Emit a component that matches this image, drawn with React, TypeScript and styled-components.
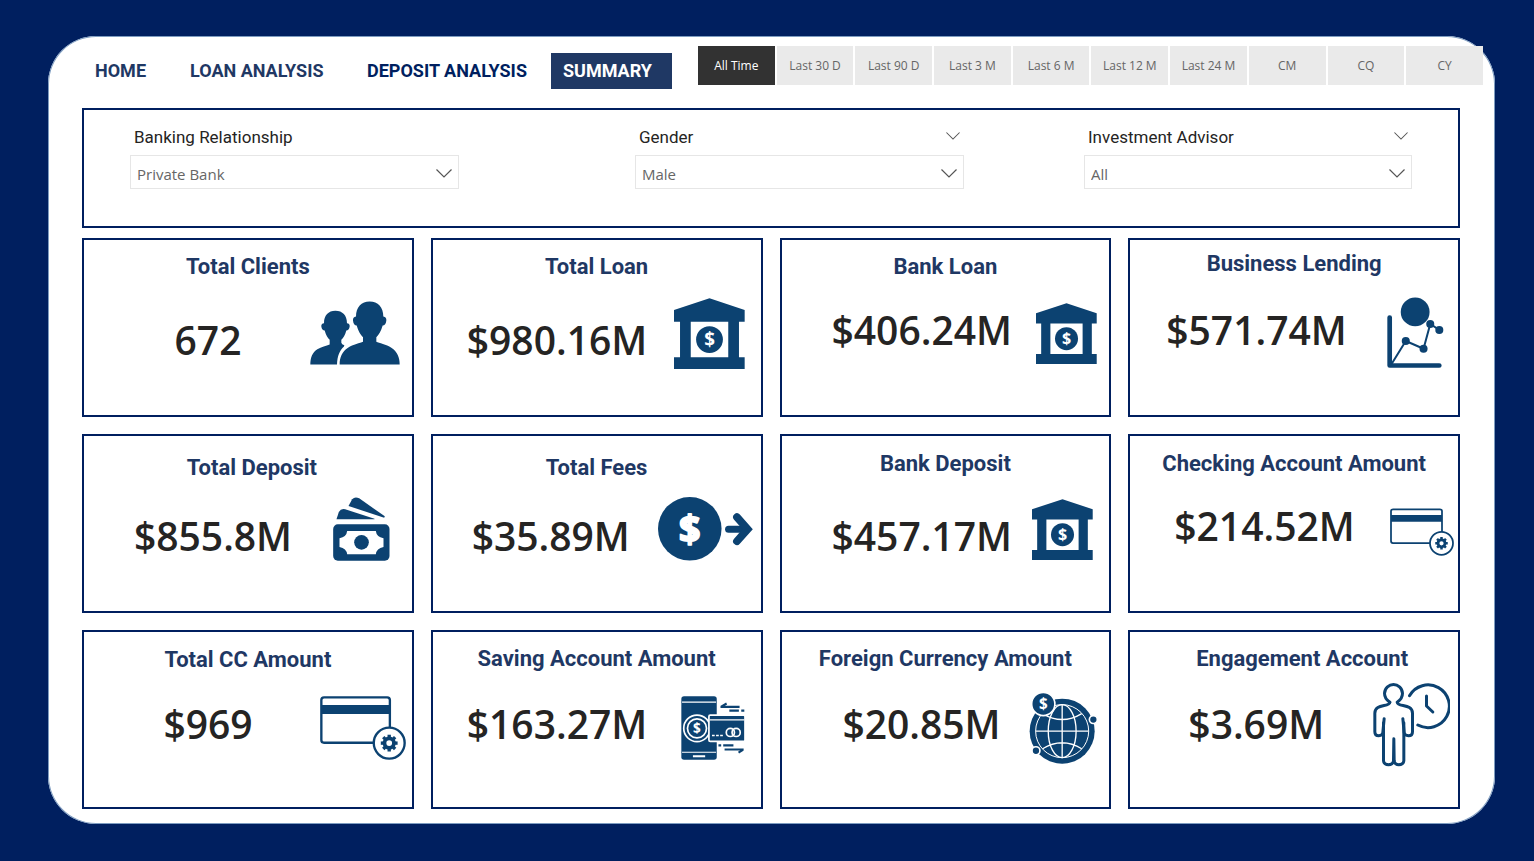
import React, { useState } from "react";
import styled, { createGlobalStyle, css } from "styled-components";

const navy = "#001f5f";
const slate = "#1f3864";
const ink = "#0c4271";
const din = `Roboto, "Liberation Sans", sans-serif`;
const segoe = `"Open Sans", "Noto Sans", sans-serif`;

const GlobalStyle = createGlobalStyle`
  * { box-sizing: border-box; }
  body { margin: 0; background: ${navy}; font-family: ${segoe}; }
`;

const Page = styled.div`
  min-height: 100vh;
  padding: 36px 39px 36px 48px;
`;

const Panel = styled.main`
  background: #fff;
  border-radius: 48px;
  box-shadow: inset 0 0 0 1px #7d9cc0;
  padding: 10px 0 15px;
`;

const Header = styled.header`
  display: flex;
  align-items: flex-start;
  gap: 26px;
  padding: 0 12px 0 47px;
`;

const Nav = styled.nav`
  display: grid;
  grid-template-columns: 95px 177px 184px 121px;
  align-items: center;
  padding-top: 7px;
`;

const NavLink = styled.a<{ $tone?: "strong" | "active" }>`
  font: 700 18px/36px ${din};
  color: ${slate};
  text-decoration: none;
  white-space: nowrap;
  ${(p) => p.$tone === "strong" && css`color: ${navy};`}
  ${(p) =>
    p.$tone === "active" &&
    css`
      color: #fff;
      background: ${slate};
      padding-left: 12px;
    `}
`;

const Periods = styled.div`
  flex: 1;
  display: grid;
  grid-template-columns: repeat(10, minmax(0, 1fr));
  gap: 2px;
`;

const Period = styled.button<{ $on: boolean }>`
  height: 39px;
  padding: 0;
  border: 0;
  font: 400 12px/16px ${segoe};
  white-space: nowrap;
  background: ${(p) => (p.$on ? "#323232" : "#eaeaea")};
  color: ${(p) => (p.$on ? "#fff" : "#666")};
`;

const Content = styled.div`
  padding: 0 35px 0 34px;
`;

const Filters = styled.section`
  margin-top: 19px;
  min-height: 120px;
  border: 2px solid ${navy};
  padding: 15px 46px 0;
  display: grid;
  grid-template-columns: 505fr 449fr 328fr;
`;

const Filter = styled.div`
  max-width: 329px;
`;

const FilterHead = styled.div`
  display: flex;
  justify-content: space-between;
  align-items: center;
  padding: 0 4px;
  margin-bottom: 6px;
`;

const FilterLabel = styled.label`
  font: 400 17px/24px ${din};
  color: #252423;
`;

const Toggle = styled.button`
  display: flex;
  border: 0;
  padding: 0 0 3px;
  background: none;
`;

const SelectWrap = styled.div`
  position: relative;
  svg {
    position: absolute;
    right: 7px;
    top: 14px;
    pointer-events: none;
  }
`;

const Select = styled.select`
  appearance: none;
  display: block;
  width: 100%;
  height: 34px;
  padding: 3px 32px 0 6px;
  border: 1px solid #e6e6e6;
  border-radius: 0;
  background: #fff;
  color: #666;
  font: 400 15px/24px ${segoe};
`;

const Cards = styled.section`
  margin-top: 10px;
  display: grid;
  grid-template-columns: repeat(4, minmax(0, 1fr));
  grid-auto-rows: minmax(179px, auto);
  gap: 17px;
`;

const Card = styled.article`
  border: 2px solid ${navy};
`;

const CardTitle = styled.h2<{ $top: number; $indent?: number }>`
  height: 44px;
  margin: 0;
  padding: ${(p) => p.$top}px 0 0 ${(p) => p.$indent ?? 0}px;
  text-align: center;
  font: 700 22px/24px ${din};
  color: ${slate};
  white-space: nowrap;
`;

const CardBody = styled.div`
  display: flex;
  justify-content: space-between;
  height: 98px;
`;

const Value = styled.p<{ $left: number; $top: number }>`
  flex: 0 0 auto;
  width: 180px;
  margin: 0 0 0 ${(p) => p.$left}px;
  padding-top: ${(p) => p.$top}px;
  text-align: center;
  font: 600 39px/48px ${segoe};
  color: #252423;
  white-space: nowrap;
`;

const IconCell = styled.div<{ $right: number; $low?: boolean }>`
  display: flex;
  align-items: center;
  margin-right: ${(p) => p.$right}px;
  padding-top: ${(p) => (p.$low ? 6 : 0)}px;
  svg {
    flex: none;
    display: block;
  }
`;

const Dollar = styled.text`
  font-family: ${segoe};
  font-weight: 700;
  fill: #fff;
  text-anchor: middle;
`;

function Chevron({ width }: { width: number }) {
  return (
    <svg width={width} height={width / 2 + 1} viewBox="0 0 16 9" fill="none" stroke="#555" strokeWidth="1.2" aria-hidden="true">
      <path d="M.5.5 8 8 15.500.5" />
    </svg>
  );
}

const ClientsIcon = () => (
  <svg width="90" height="64" viewBox="690 196 270 191" fill={ink}>
    <path d="M869 197c-25 0-41 17-41 45q-10 2-9 12c1 10 5 15 11 15 5 18 12 28 19 35v14c-8 4-30 8-45 18-18 12-25 30-25 50h180c0-20-7-38-25-50-15-10-37-14-45-18v-14c7-7 14-17 19-35 6 0 10-5 11-15q1-10-9-12c0-28-16-45-41-45z" />
    <path d="M766 225c-21 0-34 14-34 37q-9 1-8 10c1 8 5 12 10 12 4 15 9 22 15 28v14c-10 4-25 7-37 14-15 9-21 26-21 46h80c1-26 8-42 21-54l1-4q-8-2-9-7v-9c6-6 11-13 15-28 5 0 9-4 10-12q1-9-8-10c0-23-13-37-35-37z" />
  </svg>
);

const BankIcon = ({ size }: { size: number }) => (
  <svg width={size} height={size} viewBox="735 186 212 212" fill={ink}>
    <path fillRule="evenodd" d="M735 222 841 187 946 222V257H929V363H946V398H735V363H753V257H735ZM785 257V363H897V257Z" />
    <circle cx="841" cy="310" r="40" />
    <Dollar x="841" y="330" fontSize="56">$</Dollar>
  </svg>
);

const LendingIcon = () => (
  <svg width="57" height="72" viewBox="782 192 170 214" fill={ink} stroke={ink} strokeLinecap="round" strokeLinejoin="round">
    <circle cx="866" cy="236" r="43" stroke="none" />
    <path d="M790 253V396H938" fill="none" strokeWidth="14" />
    <path d="M797 389 838 323 891 346 911 272 938 290" fill="none" strokeWidth="6" />
    <g stroke="none">
      <circle cx="838" cy="323" r="12" />
      <circle cx="891" cy="346" r="12" />
      <circle cx="911" cy="272" r="12" />
      <circle cx="938" cy="290" r="12" />
    </g>
  </svg>
);

const CashIcon = () => (
  <svg width="57" height="64" viewBox="760 202 170 192" fill={ink}>
    <path d="M770 269 777 247Q783 236 796 239L884 267V269Z" />
    <path d="M806 229 817 209Q825 200 838 206L915 260 913 264Z" />
    <rect x="760" y="284" width="169" height="109" rx="14" />
    <path fill="#fff" d="M802 304H888Q890 322 911 326V352Q890 356 888 374H802Q800 356 779 352V326Q800 322 802 304Z" />
    <circle cx="845" cy="338" r="22" />
  </svg>
);

const FeesIcon = () => (
  <svg width="95" height="64" viewBox="688 197 284 191" fill="none" stroke={ink} strokeLinecap="round">
    <circle cx="783" cy="292" r="95" fill={ink} stroke="none" />
    <Dollar x="783" y="333" fontSize="112" stroke="#fff" strokeWidth="6" strokeLinejoin="round">$</Dollar>
    <path d="M899 293H946" strokeWidth="21" />
    <path d="M924 257 956 293 924 329" strokeWidth="23" />
  </svg>
);

const CreditCardIcon = ({ width, height }: { width: number; height: number }) => (
  <svg width={width} height={height} viewBox="62 50 256 190" fill="#fff" stroke={ink}>
    <rect x="66" y="54" width="204" height="135" rx="8" strokeWidth="7" />
    <path d="M66 90H270" strokeWidth="27" />
    <circle cx="268" cy="190" r="46" strokeWidth="7" />
    <circle cx="268" cy="190" r="14" strokeWidth="11" />
    <g strokeWidth="10">
      {[0, 45, 90, 135, 180, 225, 270, 315].map((a) => (
        <path key={a} d="M268 174V165" transform={`rotate(${a} 268 190)`} />
      ))}
    </g>
  </svg>
);

const MobilePayIcon = () => (
  <svg width="64" height="64" viewBox="36 36 188 188" fill="none" stroke="#fff">
    <rect x="37" y="37" width="104" height="186" rx="8" fill={ink} stroke="none" />
    <path d="M39 54H139M39 201H139" strokeWidth="3" />
    <path d="M71 213H107" strokeWidth="6" />
    <circle cx="83" cy="131" r="39" strokeWidth="5" />
    <circle cx="83" cy="131" r="28" strokeWidth="5" />
    <Dollar x="83" y="145" fontSize="40" stroke="none">$</Dollar>
    <rect x="118" y="92" width="106" height="77" rx="4" fill={ink} strokeWidth="5" />
    <path d="M120 106H222" strokeWidth="4" />
    <path d="M127 152H135M139 152H147M151 152H159" strokeWidth="5" />
    <circle cx="181" cy="143" r="12" strokeWidth="5" />
    <circle cx="198" cy="143" r="12" strokeWidth="5" />
    <g stroke={ink} strokeWidth="6">
      <path d="M152 68H208M154 67 170 58M178 79H206M213 79H222" />
      <path d="M146 181H154M160 181H190M164 193H220M218 194 205 202" />
    </g>
  </svg>
);

const GlobeIcon = () => (
  <svg width="68" height="71" viewBox="33 38 205 214" fill="none" stroke="#fff" strokeWidth="4">
    <circle cx="133" cy="153" r="98" fill={ink} stroke="none" />
    <circle cx="133" cy="153" r="80" strokeWidth="3" />
    <ellipse cx="133" cy="153" rx="42" ry="80" />
    <path d="M133 73V233M53 153H213M74 100Q133 136 192 100M74 206Q133 170 192 206" />
    <circle cx="76" cy="71" r="35" fill={ink} strokeWidth="5" />
    <Dollar x="76" y="87" fontSize="46" stroke="none">$</Dollar>
    <circle cx="227" cy="118" r="12" fill={ink} strokeWidth="5" />
    <circle cx="54" cy="212" r="12" fill={ink} strokeWidth="5" />
  </svg>
);

const EngagementIcon = () => (
  <svg width="77" height="84" viewBox="1062 11 230 252" fill="none" stroke={ink} strokeWidth="9" strokeLinecap="round" strokeLinejoin="round">
    <path d="M1112 69C1100 61 1096 52 1096 42 1098 7 1148 7 1150 42 1150 52 1146 61 1134 69 1136 84 1180 72 1180 102V157Q1180 169 1168 169 1156 169 1155 160L1151 118" />
    <path d="M1112 69C1110 84 1067 72 1067 102V157Q1067 169 1079 169 1090 169 1091 160L1095 118" />
    <path d="M1093 130V244Q1094 256 1108 256 1122 256 1123 244L1124 178 1125 244Q1126 256 1139 256 1153 256 1154 244V130" />
    <path d="M1171 49A64 64 0 1 1 1196 137" />
    <path d="M1222 50V80L1241 98" />
  </svg>
);

type CardData = {
  title: string;
  value: string;
  titleTop: number;
  indent?: number;
  left: number;
  top: number;
  right: number;
  low?: boolean;
  icon: React.ReactNode;
};

const cards: CardData[] = [
  { title: "Total Clients", value: "672", titleTop: 15, left: 34, top: 32, right: 12, icon: <ClientsIcon /> },
  { title: "Total Loan", value: "$980.16M", titleTop: 15, left: 34, top: 32, right: 16, icon: <BankIcon size={71} /> },
  { title: "Bank Loan", value: "$406.24M", titleTop: 15, left: 50, top: 22, right: 12, icon: <BankIcon size={61} /> },
  { title: "Business Lending", value: "$571.74M", titleTop: 12, left: 36, top: 22, right: 14, icon: <LendingIcon /> },
  { title: "Total Deposit", value: "$855.8M", titleTop: 20, indent: 8, left: 39, top: 32, right: 22, icon: <CashIcon /> },
  { title: "Total Fees", value: "$35.89M", titleTop: 20, left: 28, top: 32, right: 8, icon: <FeesIcon /> },
  { title: "Bank Deposit", value: "$457.17M", titleTop: 16, left: 50, top: 32, right: 16, icon: <BankIcon size={61} /> },
  { title: "Checking Account Amount", value: "$214.52M", titleTop: 16, left: 44, top: 22, right: 4, low: true, icon: <CreditCardIcon width={64} height={48} /> },
  { title: "Total CC Amount", value: "$969", titleTop: 16, left: 34, top: 24, right: 6, low: true, icon: <CreditCardIcon width={86} height={64} /> },
  { title: "Saving Account Amount", value: "$163.27M", titleTop: 15, left: 34, top: 24, right: 16, low: true, icon: <MobilePayIcon /> },
  { title: "Foreign Currency Amount", value: "$20.85M", titleTop: 15, left: 50, top: 24, right: 12, low: true, icon: <GlobeIcon /> },
  { title: "Engagement Account", value: "$3.69M", titleTop: 15, indent: 16, left: 36, top: 24, right: 8, icon: <EngagementIcon /> },
];

const periods = ["All Time", "Last 30 D", "Last 90 D", "Last 3 M", "Last 6 M", "Last 12 M", "Last 24 M", "CM", "CQ", "CY"];

const filters = [
  { id: "relationship", label: "Banking Relationship", value: "Private Bank", toggle: false },
  { id: "gender", label: "Gender", value: "Male", toggle: true },
  { id: "advisor", label: "Investment Advisor", value: "All", toggle: true },
];

export default function App() {
  const [period, setPeriod] = useState("All Time");
  return (
    <Page>
      <GlobalStyle />
      <Panel>
        <Header>
          <Nav>
            <NavLink href="#home">HOME</NavLink>
            <NavLink href="#loan">LOAN ANALYSIS</NavLink>
            <NavLink href="#deposit" $tone="strong">DEPOSIT ANALYSIS</NavLink>
            <NavLink href="#summary" $tone="active" aria-current="page">SUMMARY</NavLink>
          </Nav>
          <Periods>
            {periods.map((p) => (
              <Period key={p} type="button" $on={p === period} aria-pressed={p === period} onClick={() => setPeriod(p)}>
                {p}
              </Period>
            ))}
          </Periods>
        </Header>
        <Content>
          <Filters>
            {filters.map((f) => (
              <Filter key={f.id}>
                <FilterHead>
                  <FilterLabel htmlFor={f.id}>{f.label}</FilterLabel>
                  {f.toggle && (
                    <Toggle type="button" aria-label={`${f.label} options`}>
                      <Chevron width={14} />
                    </Toggle>
                  )}
                </FilterHead>
                <SelectWrap>
                  <Select id={f.id} defaultValue={f.value}>
                    <option>{f.value}</option>
                  </Select>
                  <Chevron width={16} />
                </SelectWrap>
              </Filter>
            ))}
          </Filters>
          <Cards>
            {cards.map((c) => (
              <Card key={c.title}>
                <CardTitle $top={c.titleTop} $indent={c.indent}>{c.title}</CardTitle>
                <CardBody>
                  <Value $left={c.left} $top={c.top}>{c.value}</Value>
                  <IconCell $right={c.right} $low={c.low} aria-hidden="true">{c.icon}</IconCell>
                </CardBody>
              </Card>
            ))}
          </Cards>
        </Content>
      </Panel>
    </Page>
  );
}
